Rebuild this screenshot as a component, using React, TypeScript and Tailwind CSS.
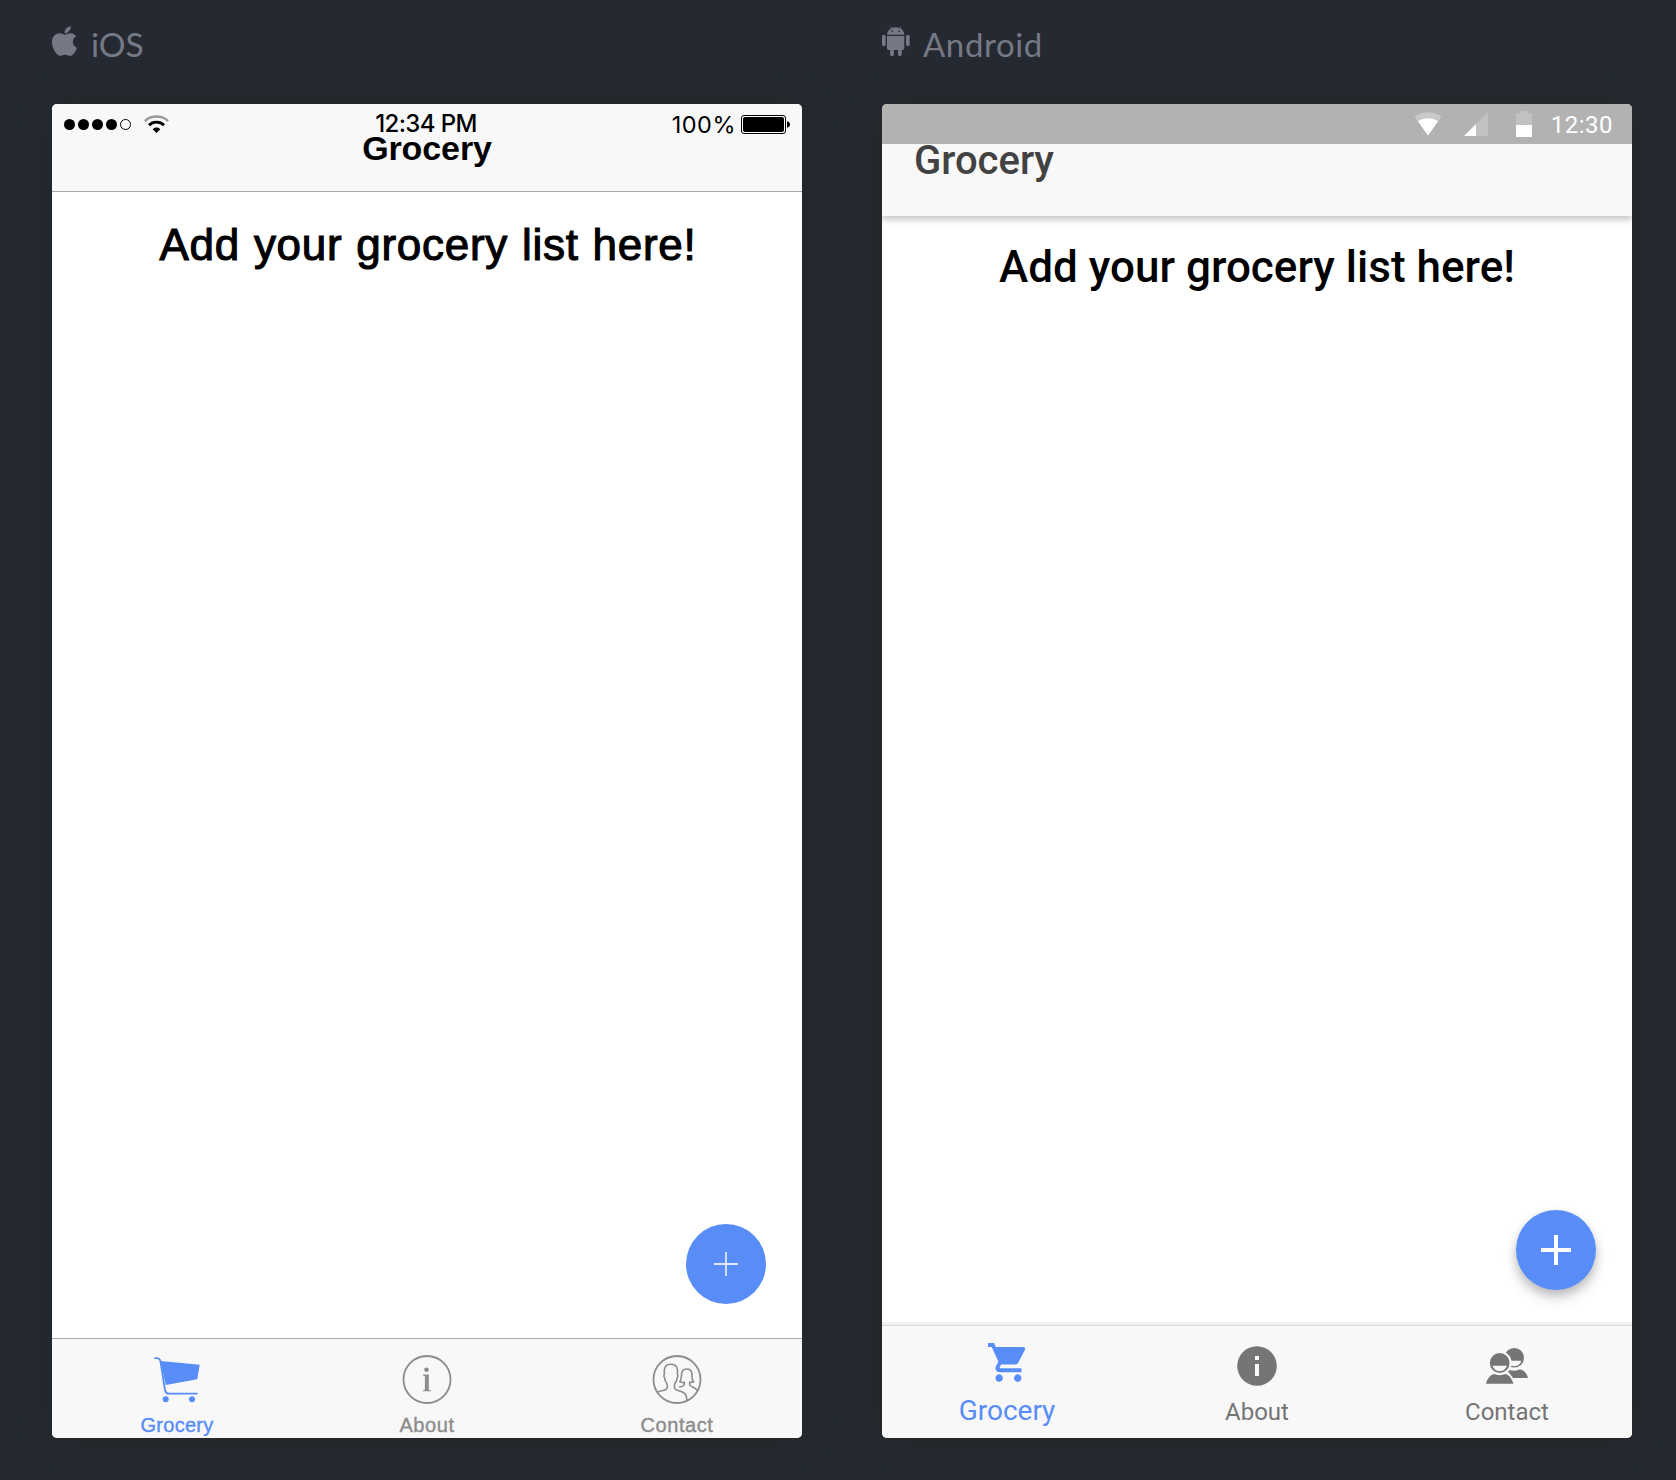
import React from "react";

const sans = "font-['Liberation_Sans',Arial,sans-serif]";
const roboto = "font-[Roboto,sans-serif]";

function AppleLogo() {
  return (
    <svg className="h-[30px] w-[25px]" viewBox="4 32 376.5 448" fill="currentColor">
      <path d="M318.7 268.7c-.2-36.7 16.4-64.4 50-84.8-18.8-26.9-47.2-41.7-84.7-44.6-35.5-2.8-74.3 20.7-88.5 20.7-15 0-49.4-19.7-76.4-19.7C63.3 141.2 4 184.8 4 273.5q0 39.3 14.4 81.2c12.8 36.7 59 126.7 107.2 125.2 25.2-.6 43-17.9 75.8-17.9 31.8 0 48.3 17.9 76.4 17.9 48.6-.7 90.4-82.5 102.6-119.3-65.2-30.7-61.7-90-61.7-91.9zm-56.6-164.2c27.3-32.4 24.8-61.9 24-72.5-24.1 1.4-52 16.4-67.9 34.9-17.5 19.8-27.8 44.3-25.6 71.9 26.1 2 49.9-11.4 69.5-34.3z" />
    </svg>
  );
}

function AndroidLogo() {
  return (
    <svg className="h-[30px] w-[28px]" viewBox="0 0 28 30" fill="currentColor">
      <path
        fillRule="evenodd"
        d="M5 8.700C5.100 5.800 6.700 3.500 9.200 2.200L8.200.6l.5-.3 1.100 1.700C11.100 1.400 12.500 1.200 13.700 1.200s2.700.2 3.900.8L18.700.3l.5.3-1 1.600C20.700 3.500 22.200 5.800 22.300 8.700zM10 4.200a.9.9 0 1 0 0 1.800.9.9 0 0 0 0-1.800zm7.300 0a.9.9 0 1 0 0 1.800.9.9 0 0 0 0-1.800z"
      />
      <path d="M5 10h17.300v12.300a1.700 1.700 0 0 1-1.700 1.700h-.9v4.200a1.850 1.850 0 0 1-3.700 0V24h-4.100v4.200a1.850 1.850 0 0 1-3.700 0V24h-1.500A1.700 1.700 0 0 1 5 22.300z" />
      <rect x="0" y="8.700" width="3.700" height="11.500" rx="1.850" />
      <rect x="24" y="8.700" width="3.700" height="11.500" rx="1.850" />
    </svg>
  );
}

function IosWifi() {
  return (
    <svg className="h-[18px] w-[25px]" viewBox="0 0 25 18" fill="none">
      <path d="M.9 6.100C7 .1 18 .1 24.100 6.100" stroke="#9a9a9a" strokeWidth="2.500" />
      <path d="M5 10.200C9 6.200 16 6.200 20 10.200" stroke="#000" strokeWidth="2.700" />
      <path d="M12.500 18L8.700 14.200C10.600 11.800 14.400 11.800 16.300 14.200z" fill="#000" />
    </svg>
  );
}

function IosBattery() {
  return (
    <svg className="h-[19px] w-[49px]" viewBox="0 0 49 19">
      <rect x=".5" y=".5" width="44" height="18" rx="2.500" fill="#fff" stroke="#000" />
      <rect x="2" y="2" width="41" height="15" rx="2" fill="#000" />
      <path d="M46 6.200c4 .6 4 6 0 6.600z" fill="#000" />
    </svg>
  );
}

function IosCart() {
  return (
    <svg className="h-[46px] w-[46px]" viewBox="0 0 46 46" fill="none">
      <path d="M6.500 4L45.700 7.700L43.300 22.300L11.800 28z" fill="currentColor" />
      <path
        d="M.3 1.200H2.500C5 1.200 6.200 2.300 6.600 5L10.900 32.500C11.400 35.500 12.500 36.700 15 36.700H43.500"
        stroke="currentColor"
        strokeWidth="1.800"
      />
      <circle cx="11.700" cy="42.300" r="3" fill="currentColor" />
      <circle cx="38" cy="42.300" r="3" fill="currentColor" />
    </svg>
  );
}

function IosInfo() {
  return (
    <svg className="h-[49px] w-[50px]" viewBox="0 0 50 49" fill="none">
      <circle cx="25" cy="24.500" r="23.500" stroke="currentColor" strokeWidth="1.800" />
      <circle cx="24.500" cy="14.800" r="2.300" fill="currentColor" />
      <path
        d="M21 19.600H26.800V34.300C26.800 35 27.200 35.300 28.800 35.500V36.300H20.800V35.500C22.500 35.300 22.900 35 22.900 34.300V21.700C22.900 20.900 22.500 20.600 21 20.400z"
        fill="currentColor"
      />
    </svg>
  );
}

function IosContacts() {
  return (
    <svg
      className="h-[49px] w-[50px]"
      viewBox="-0.500 0 50 49"
      fill="none"
      stroke="currentColor"
      strokeWidth="1.600"
    >
      <circle cx="24.500" cy="24.500" r="23.500" strokeWidth="1.800" />
      <path d="M4.800 37.200C8 35.500 12.500 36 14 34.100C15.200 32.500 15 30.500 14.500 28.700C13 26.800 12.300 25.300 12 22.600C11.200 21.500 11.300 20 11.900 19C11.300 13 12.500 9.200 18.400 9.200C24.300 9.200 25.700 13 24.900 19C25.600 20 25.500 21.500 24.800 22.600C24.500 25.300 23.800 26.800 22.400 28.700C21.700 30.500 21.600 32.500 22.800 34.100C24.600 36.200 29 35.900 32 38.300C34.200 40.200 34.300 42.500 34.300 45.600" />
      <path d="M26.700 31.900C29 31.700 31 31.400 31.700 30V27.300C30 27.600 28.400 27.300 27.500 26.800C29.300 24 28.800 20 29.300 17.500C30 14.900 32 14 34.300 14C37.200 14 39 15.500 39.300 18.300C39.700 21.500 39 24.300 41 26.800C40 27.400 38.500 27.500 37.200 27.300V30C38.200 32 42 31.500 44.700 35.300" />
    </svg>
  );
}

function MdCart() {
  return (
    <svg className="h-[39px] w-[39px]" viewBox="1 2 20.980 20" preserveAspectRatio="none" fill="currentColor">
      <path d="M7 18c-1.100 0-1.990.9-1.990 2S5.900 22 7 22s2-.9 2-2-.9-2-2-2zM1 2v2h2l3.600 7.590-1.350 2.450c-.16.28-.25.61-.25.96 0 1.100.9 2 2 2h12v-2H7.420c-.14 0-.25-.11-.25-.25l.03-.12.9-1.630h7.450c.75 0 1.410-.41 1.750-1.030l3.580-6.490c.08-.14.12-.31.12-.48 0-.55-.45-1-1-1H5.210l-.94-2H1zm16 16c-1.100 0-1.990.9-1.990 2s.89 2 1.990 2 2-.9 2-2-.9-2-2-2z" />
    </svg>
  );
}

function MdInfo() {
  return (
    <svg className="h-[40px] w-[40px]" viewBox="0 0 40 40">
      <circle cx="20" cy="20" r="19.800" fill="currentColor" />
      <path d="M18 10h4v4h-4zM18 18h4v12h-4z" fill="#f8f8f8" />
    </svg>
  );
}

function MdContacts() {
  return (
    <svg className="h-[36px] w-[42px]" viewBox="0 0 42 36">
      <circle cx="28.200" cy="9.800" r="9.800" fill="currentColor" />
      <path d="M21.500 12.800H35.200C34 20 22.700 20 21.500 12.800z" fill="#f8f8f8" />
      <path d="M20.500 21.600C28 23.500 31.500 22.500 34 21.200C38.500 22.500 41 25.500 42 30H25.500z" fill="currentColor" />
      <circle cx="13.700" cy="15" r="12" fill="#f8f8f8" />
      <path d="M18 24.500L22 23.500L27.500 30.500L24 31z" fill="#f8f8f8" />
      <circle cx="13.700" cy="15" r="9.900" fill="currentColor" />
      <path d="M6.600 17.800H20.800C19 25 8.400 25 6.600 17.800z" fill="#f8f8f8" />
      <path d="M8.200 26C11.500 27.500 16 27.500 19.200 26C23.500 27.200 26.300 31 27.300 35.800H0C1 31 4 27.200 8.200 26z" fill="currentColor" />
    </svg>
  );
}

function IosStatusBar() {
  return (
    <div className="absolute inset-x-0 top-0 grid h-10 grid-cols-3 items-center pl-3 pr-3 text-black">
      <div className="flex items-center gap-[3px]">
        <span className="size-[11px] rounded-full bg-black" />
        <span className="size-[11px] rounded-full bg-black" />
        <span className="size-[11px] rounded-full bg-black" />
        <span className="size-[11px] rounded-full bg-black" />
        <span className="size-[11px] rounded-full border border-black bg-white" />
        <span className="ml-[10px]">
          <IosWifi />
        </span>
      </div>
      <span className="pr-[2px] text-center font-[Inter,sans-serif] text-[24px] leading-9 font-medium tracking-[-0.600px] whitespace-nowrap">
        12:34 PM
      </span>
      <div className="flex items-center justify-end gap-[5px]">
        <span className="mt-[2px] font-[Inter,sans-serif] text-[23.500px] leading-9 tracking-[0.500px]">
          100%
        </span>
        <IosBattery />
      </div>
    </div>
  );
}

function MdStatusBar() {
  return (
    <div className="relative z-20 flex h-10 shrink-0 items-center justify-end bg-[#b2b2b2] pr-[19px] text-white">
      <svg className="h-[24px] w-[28px]" viewBox="0 0 28 24" fill="#fff">
        <path d="M.5 4.800C8-1.300 20-1.300 27.500 4.800L14 23.500z" opacity=".3" />
        <path d="M4 9.300C9.500 5.200 18.500 5.200 24 9.300L14 23.500z" />
      </svg>
      <svg className="ml-[22px] h-[24px] w-[24px]" viewBox="0 0 24 24" fill="#fff">
        <path d="M0 24L24 0V24z" opacity=".2" />
        <path d="M0 24L12 12V24z" />
      </svg>
      <svg className="ml-[28px] h-[26px] w-[16px]" viewBox="0 0 16 26" fill="#fff">
        <path d="M0 2H4V0H12V2H16V14H0z" opacity=".2" />
        <path d="M0 14H16V26H0z" />
      </svg>
      <span className="mt-[2px] ml-[19px] text-[24px] leading-9 tracking-[0.500px]">12:30</span>
    </div>
  );
}

const panel =
  "relative flex h-[1334px] w-[750px] flex-col overflow-hidden rounded-[5px] bg-white";
const panelShadow = "rounded-[5px] shadow-[0_0_30px_8px_#23282a]";

function IosPhone() {
  return (
    <div className={panelShadow}>
      <div className={`${panel} ${sans}`}>
        <header className="h-[88px] shrink-0 border-b border-[#a9a9ab] bg-[#f8f8f8] pt-6 text-center">
          <h1 className="text-[34px] leading-10 font-bold tracking-[-0.100px] text-black">Grocery</h1>
        </header>
        <IosStatusBar />
        <main className="relative flex-1 pt-[27px] text-center">
          <h2 className="pl-[2px] text-[44px] leading-[52px] tracking-[0.720px] text-black [-webkit-text-stroke:1.100px_#000] [word-spacing:1px]">
            Add your grocery list here!
          </h2>
          <button className="absolute right-9 bottom-[34px] flex size-20 items-center justify-center rounded-full bg-[#588df8]">
            <svg className="size-6" viewBox="0 0 24 24" stroke="#dde8fe" strokeWidth="1.800">
              <path d="M12 0V24M0 12H24" />
            </svg>
          </button>
        </main>
        <nav className="grid h-[100px] shrink-0 grid-cols-3 border-t border-[#a9a9ab] bg-[#f8f8f8] text-[20px] leading-6 tracking-[0.550px] text-[#8c8c8c] [-webkit-text-stroke:0.4px_currentColor]">
          <div className="flex flex-col items-center pt-[18px] text-[#588df8]">
            <IosCart />
            <span className="mt-[10px] tracking-[0.250px]">Grocery</span>
          </div>
          <div className="flex flex-col items-center pt-4">
            <IosInfo />
            <span className="mt-[9px]">About</span>
          </div>
          <div className="flex flex-col items-center pt-4">
            <IosContacts />
            <span className="mt-[9px]">Contact</span>
          </div>
        </nav>
      </div>
    </div>
  );
}

function MdPhone() {
  return (
    <div className={panelShadow}>
      <div className={`${panel} ${roboto}`}>
        <MdStatusBar />
        <header className="relative z-10 h-[72px] shrink-0 bg-[#f8f8f8] pt-px pl-8 shadow-[0_4px_6px_rgba(0,0,0,0.22)]">
          <h1 className="text-[40px] leading-8 font-medium text-[#424242]">Grocery</h1>
        </header>
        <main className="relative flex-1 pt-[25px] text-center">
          <h2 className="text-[44px] leading-[52px] font-medium text-black">
            Add your grocery list here!
          </h2>
          <button className="absolute right-9 bottom-9 flex size-20 items-center justify-center rounded-full bg-[#588df8] shadow-[0_8px_14px_rgba(0,0,0,0.17),0_4px_8px_rgba(0,0,0,0.14)]">
            <svg className="size-[30px]" viewBox="0 0 30 30" stroke="#fff" strokeWidth="4">
              <path d="M15 0V30M0 15H30" />
            </svg>
          </button>
        </main>
        <nav className="relative grid h-28 shrink-0 grid-cols-3 bg-[#f8f8f8] text-[24px] leading-7 text-[#757575] shadow-[0_-1px_1px_rgba(0,0,0,0.1),0_-4px_0_#f3f3f3]">
          <div className="flex flex-col items-center pt-[17px] text-[#588df8]">
            <MdCart />
            <span className="mt-[15px] text-[28px]">Grocery</span>
          </div>
          <div className="flex flex-col items-center pt-5">
            <MdInfo />
            <span className="mt-3">About</span>
          </div>
          <div className="flex flex-col items-center pt-[22px]">
            <MdContacts />
            <span className="mt-[14px]">Contact</span>
          </div>
        </nav>
      </div>
    </div>
  );
}

export default function App() {
  return (
    <div className="flex h-[1480px] w-[1676px] gap-20 overflow-hidden bg-[#252a32] px-[52px]">
      <section className="flex w-[750px] flex-col">
        <div className="flex h-[104px] items-start text-[#757986]">
          <span className="mt-[26px]">
            <AppleLogo />
          </span>
          <span className="mt-[24px] ml-[14px] font-[Lato,sans-serif] text-[33.500px] leading-10">iOS</span>
        </div>
        <IosPhone />
      </section>
      <section className="flex w-[750px] flex-col">
        <div className="flex h-[104px] items-start text-[#757986]">
          <span className="mt-[26px]">
            <AndroidLogo />
          </span>
          <span className="mt-[24px] ml-[13px] font-[Lato,sans-serif] text-[33px] leading-10 tracking-[0.600px]">
            Android
          </span>
        </div>
        <MdPhone />
      </section>
    </div>
  );
}
